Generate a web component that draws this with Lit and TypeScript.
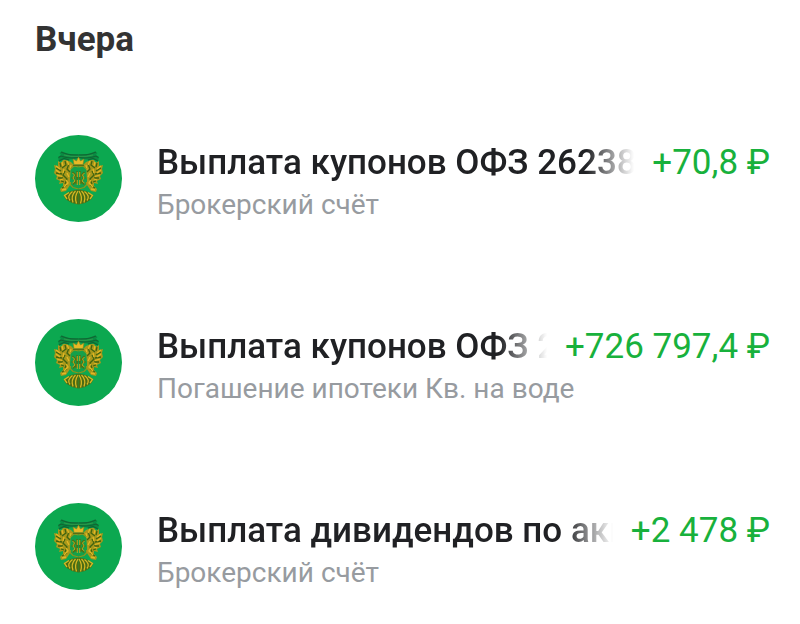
import { LitElement, html, css } from 'lit';
import { customElement, property } from 'lit/decorators.js';

interface Operation {
  title: string;
  account: string;
  amount: string;
}

const operations: Operation[] = [
  {
    title: 'Выплата купонов ОФЗ 26238',
    account: 'Брокерский счёт',
    amount: '+70,8\u00a0₽',
  },
  {
    title: 'Выплата купонов ОФЗ 26238',
    account: 'Погашение ипотеки Кв. на воде',
    amount: '+726\u00a0797,4\u00a0₽',
  },
  {
    title: 'Выплата дивидендов по акциям',
    account: 'Брокерский счёт',
    amount: '+2\u00a0478\u00a0₽',
  },
];

/** Round green logo with the golden coat of arms. */
@customElement('issuer-logo')
export class IssuerLogo extends LitElement {
  static styles = css`
    :host {
      display: block;
      width: 87px;
      height: 87px;
    }

    svg {
      display: block;
      width: 100%;
      height: 100%;
    }
  `;

  render() {
    return html`
      <svg viewBox="0 0 87 87" aria-hidden="true">
        <defs>
          <g id="half">
            <!-- ribbon -->
            <path
              d="M43.5 19L34 19L27 16.500L24.500 18L26 20L23 22.500L24 26.500L29 24L33 25L43.5 23Z"
              fill="#0a8c43"
            />
            <path
              d="M26 17Q33 20.500 43.5 20M26 21Q33 24 43.5 22.500M23.500 22.500L26 21M24 26L29 23.500L34 25"
              fill="none"
              stroke="#116633"
              stroke-width="1.2"
            />
            <path d="M29 20Q35 22 43.5 21.300" fill="none" stroke="#3f9f4c" stroke-width="0.7" />
            <!-- eagle, wing raised outwards -->
            <path
              d="M31 25L36 27L39 30L37 33L36 38L35 44L35 50L31 56L26 57L25 54L28 51L28 48L24 49L25 46L21 44L22 41L19 38L20 34L19 30L23 31L23 26L26 28L28 25Z"
              fill="#a8981b"
            />
            <path
              d="M30 26L31 30L27 33M25 28L26 32M21 33L26 36M21 38L27 39M23 43L28 43M34 29L32 34L35 37M30 36L28 40L32 44L30 49M26 46L29 47M27 53L32 50"
              fill="none"
              stroke="#416410"
              stroke-width="1.3"
            />
            <path
              d="M27 27L28 31M21 31L25 34M21 35L25 38M22 40L27 41.500M25 45L28 44M32 26L34 30M29 34L28 38M32 38L34 42M31 45L33 48L29 52M27 55L31 54M36 30L35 35"
              fill="none"
              stroke="#e3b724"
              stroke-width="1.3"
            />
            <!-- half of the shield -->
            <path d="M43.5 32H37L35.500 35V50L38 53L43.5 54.500Z" fill="#14a04a" />
            <path
              d="M43.5 32L39 31L35.500 34M35.500 47V50L38 52.500L43.5 54"
              fill="none"
              stroke="#8f961c"
              stroke-width="1.2"
            />
            <path
              d="M37.500 37L40 39.500L38.500 43L40.500 46L38 49.500M42 36V49M40.500 40L43 43.500M40 48L42 46M36.500 43H39"
              fill="none"
              stroke="#4d7214"
              stroke-width="1.5"
            />
            <path
              d="M37.5 38L39.500 40L38 43L40 46L37.5 48M42.300 37V42M42.300 45V50"
              fill="none"
              stroke="#c8ae20"
              stroke-width="0.9"
            />
            <!-- fan below the shield -->
            <path
              d="M43.5 54.500L36 56L28.500 60.500L31 64.500L37 68L43.5 69.500Z"
              fill="#4c6c13"
            />
            <path
              d="M34 57.500L29.500 60.500L32 64M37.500 56.500Q31.500 61 35 65.500M40.500 56Q35.500 61 38 67.500M43 56Q39 62 41.500 68.500"
              fill="none"
              stroke="#d6b824"
              stroke-width="1.3"
            />
          </g>
        </defs>
        <circle cx="43.5" cy="43.5" r="43.5" fill="#0ca850" />
        <use href="#half" />
        <use href="#half" transform="matrix(-1 0 0 1 87 0)" />
        <path
          d="M39 29.500L38 24L41.500 26L43.500 22L45.500 26L49 24L48 29.500Z"
          fill="#e8b927"
          stroke="#8b8115"
          stroke-width="0.6"
        />
        <path d="M38 30.500H49" stroke="#5b6c14" />
      </svg>
    `;
  }
}

@customElement('operation-row')
export class OperationRow extends LitElement {
  @property({ attribute: false }) operation!: Operation;

  static styles = css`
    :host {
      display: flex;
      align-items: flex-start;
      gap: 35px;
    }

    issuer-logo {
      flex: none;
    }

    .details {
      flex: 1;
      min-width: 0;
      padding-top: 6px;
    }

    .main {
      display: flex;
      gap: 18px;
      font-size: 35px;
      line-height: 44px;
    }

    .title {
      flex: 1;
      min-width: 0;
      overflow: hidden;
      white-space: nowrap;
      font-weight: 500;
      color: #202124;
      mask-image: linear-gradient(to left, transparent, #000 48px);
    }

    .amount {
      flex: none;
      color: #18b13c;
    }

    .account {
      font-size: 28px;
      line-height: 40px;
      color: #979ba0;
    }
  `;

  render() {
    const { title, account, amount } = this.operation;
    return html`
      <issuer-logo></issuer-logo>
      <div class="details">
        <div class="main">
          <div class="title">${title}</div>
          <div class="amount">${amount}</div>
        </div>
        <div class="account">${account}</div>
      </div>
    `;
  }
}

@customElement('app-root')
export class AppRoot extends LitElement {
  static styles = css`
    :host {
      display: block;
      min-height: 100vh;
      box-sizing: border-box;
      padding: 20px 30px 24px 35px;
      background: #fff;
      font-family: Roboto, sans-serif;
    }

    h2 {
      margin: 0 0 75px;
      font-size: 35px;
      line-height: 40px;
      font-weight: 700;
      color: #333;
    }

    ul {
      display: flex;
      flex-direction: column;
      gap: 94px;
      margin: 0;
      padding: 0;
      list-style: none;
    }
  `;

  render() {
    return html`
      <h2>Вчера</h2>
      <ul>
        ${operations.map(
          operation => html`<li><operation-row .operation=${operation}></operation-row></li>`
        )}
      </ul>
    `;
  }
}
